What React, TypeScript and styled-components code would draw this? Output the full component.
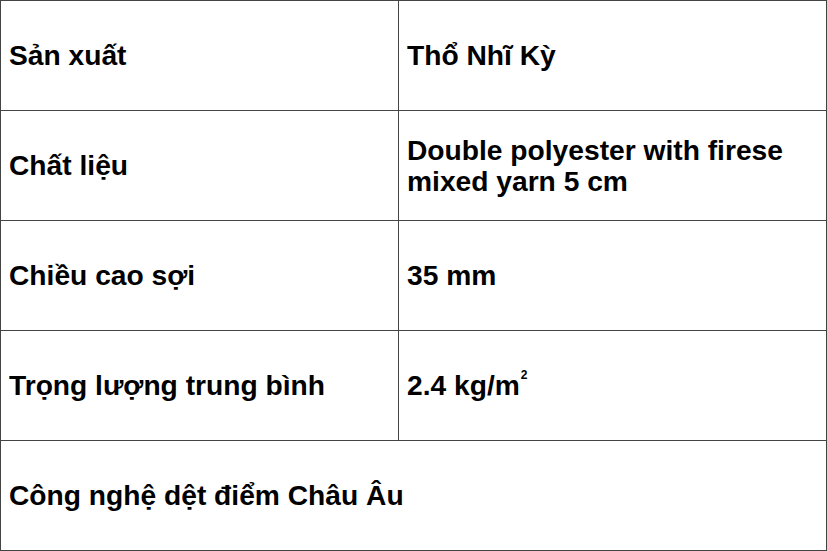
import React from "react";
import styled, { createGlobalStyle } from "styled-components";

const Global = createGlobalStyle`
  html, body { margin: 0; padding: 0; background: #fff; }
  body { font-family: "Liberation Sans", Arial, sans-serif; }
`;

const Table = styled.table`
  width: 827px;
  border-collapse: collapse;
  table-layout: fixed;
`;

const Row = styled.tr`
  height: 110px;
`;

const Cell = styled.td<{ $w?: number }>`
  border: 1px solid #444;
  padding: 0 8px;
  font-family: "Liberation Sans", Arial, sans-serif;
  font-weight: bold;
  font-size: 28.2px;
  line-height: 31px;
  color: #000;
  vertical-align: middle;
  width: ${(p) => (p.$w ? `${p.$w}px` : "auto")};
`;

const Sup = styled.sup`
  font-size: 12px;
  line-height: 0;
  vertical-align: top;
  position: relative;
  top: 5px;
  margin-left: 1px;
`;

export default function App() {
  return (
    <>
      <Global />
      <Table>
        <tbody>
          <Row>
            <Cell $w={381}>Sản xuất</Cell>
            <Cell>Thổ Nhĩ Kỳ</Cell>
          </Row>
          <Row>
            <Cell>Chất liệu</Cell>
            <Cell>Double polyester with firese mixed yarn 5 cm</Cell>
          </Row>
          <Row>
            <Cell>Chiều cao sợi</Cell>
            <Cell>35 mm</Cell>
          </Row>
          <Row>
            <Cell>Trọng lượng trung bình</Cell>
            <Cell>
              2.4 kg/m<Sup>2</Sup>
            </Cell>
          </Row>
          <Row>
            <Cell colSpan={2}>Công nghệ dệt điểm Châu Âu</Cell>
          </Row>
        </tbody>
      </Table>
    </>
  );
}
